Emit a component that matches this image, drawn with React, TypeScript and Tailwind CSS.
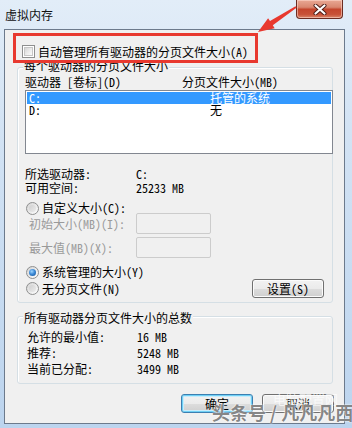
import React from "react";

function Checkbox() {
  return (
    <div className="flex h-[13px] w-[13px] shrink-0 items-center justify-center border border-[#8e8f8f] bg-white">
      <div className="h-[9px] w-[9px] border border-[#c6c6c6] bg-[linear-gradient(135deg,#d6d6d6_0%,#eeeeee_60%,#fafafa_100%)]" />
    </div>
  );
}

function Radio({ checked }: { checked?: boolean }) {
  return (
    <div className="flex h-[13px] w-[13px] shrink-0 items-center justify-center rounded-full border border-[#8e8f8f] bg-[linear-gradient(135deg,#d3d3d3_0%,#f2f2f2_70%,#ffffff_100%)]">
      {checked ? (
        <div className="h-[7px] w-[7px] rounded-full bg-[radial-gradient(circle_at_40%_35%,#9fd6ff_0%,#3d8ad6_45%,#0f4f95_100%)]" />
      ) : (
        <div className="h-[7px] w-[7px] rounded-full bg-[linear-gradient(135deg,#cfcfcf_0%,#ececec_100%)]" />
      )}
    </div>
  );
}

function Button({ label, focused }: { label: string; focused?: boolean }) {
  return (
    <div
      className={
        focused
          ? "flex h-[19px] w-[72px] items-center justify-center rounded-[3px] border border-[#3c7fb1] bg-[linear-gradient(180deg,#f2f2f2_0%,#ebebeb_50%,#dddddd_50%,#cfcfcf_100%)] shadow-[inset_0_0_0_1px_#6fd0f5,inset_0_0_0_2px_#c8ecfb]"
          : "flex h-[19px] w-[72px] items-center justify-center rounded-[3px] border border-[#707070] bg-[linear-gradient(180deg,#f2f2f2_0%,#ebebeb_50%,#dddddd_50%,#cfcfcf_100%)] shadow-[inset_0_0_0_1px_#fbfbfb]"
      }
    >
      <span className="leading-[12px]">{label}</span>
    </div>
  );
}

export default function App() {
  return (
    <div className="relative h-[428px] w-[352px] overflow-hidden bg-[linear-gradient(180deg,#e2edf8_0%,#d3e3f4_30%,#bcd4ee_100%)] font-['Noto_Sans_Mono_CJK_SC','Noto_Sans_CJK_SC',sans-serif] text-[12px] leading-[12px] text-black">
      {/* title bar */}
      <div className="flex h-[29px] items-start">
        <div className="pl-[5px] pt-[9px] font-['Noto_Sans_CJK_SC',sans-serif] text-[12px] leading-[12px] text-[#111]">
          虚拟内存
        </div>
        <div className="ml-auto mr-[9px] flex h-[19px] w-[47px] items-center justify-center rounded-b-[4px] border border-t-0 border-[#6b2c22] bg-[linear-gradient(180deg,#e9a894_0%,#d98770_40%,#c4462d_52%,#c85238_80%,#d9866a_100%)] shadow-[inset_0_0_0_1px_rgba(255,220,210,0.55)]">
          <svg width="14" height="11" viewBox="0 0 14 11">
            <path d="M2.5 1.5 L11.5 9.5 M11.5 1.5 L2.5 9.5" stroke="#4a1a14" strokeWidth="4" strokeLinecap="round" />
            <path d="M2.5 1.5 L11.5 9.5 M11.5 1.5 L2.5 9.5" stroke="#ffffff" strokeWidth="2.2" strokeLinecap="round" />
          </svg>
        </div>
      </div>

      {/* client area */}
      <div className="relative ml-[4px] mr-[7px] flex h-[395px] flex-col border border-[#6c7a8c] bg-[#f0f0f0] pl-[12px] pr-[11px]">
        {/* auto manage checkbox */}
        <div className="ml-[5px] mt-[15px] flex h-[13px] items-center">
          <Checkbox />
          <span className="ml-[3px]">自动管理所有驱动器的分页文件大小(A)</span>
        </div>

        {/* group 1 */}
        <div className="relative mt-[9px] flex h-[236px] flex-col rounded-[3px] border border-[#d5dfe5] shadow-[inset_1px_1px_0_#ffffff]">
          <span className="absolute left-[5px] top-[-8px] bg-[#f0f0f0] px-[1px]">每个驱动器的分页文件大小</span>
          <div className="mt-[8px] flex h-[12px]">
            <span className="ml-[7px] w-[157px]">驱动器 [卷标](D)</span>
            <span>分页文件大小(MB)</span>
          </div>
          <div className="ml-[7px] mr-[-1px] mt-[2px] flex h-[64px] flex-col border border-[#828790] bg-white p-[1px]">
            <div className="flex h-[12px] bg-[#3399ff] text-white">
              <span className="w-[183px] pl-[2px]">C:</span>
              <span>托管的系统</span>
            </div>
            <div className="flex h-[12px]">
              <span className="w-[183px] pl-[2px]">D:</span>
              <span>无</span>
            </div>
          </div>
          <div className="mt-[14px] flex h-[12px]">
            <span className="ml-[7px] w-[111px]">所选驱动器:</span>
            <span>C:</span>
          </div>
          <div className="mt-[2px] flex h-[12px]">
            <span className="ml-[7px] w-[111px]">可用空间:</span>
            <span>25233 MB</span>
          </div>
          <div className="ml-[8px] mt-[8px] flex h-[12px] items-center">
            <Radio />
            <span className="ml-[3px]">自定义大小(C):</span>
          </div>
          <div className="mt-[-1px] flex h-[21px] items-center">
            <span className="ml-[11px] w-[107px] text-[#9a9a9a]">初始大小(MB)(I):</span>
            <div className="h-[21px] w-[75px] rounded-[2px] border border-[#cccccc] bg-[#f0f0f0]" />
          </div>
          <div className="mt-[3px] flex h-[21px] items-center">
            <span className="ml-[11px] w-[107px] text-[#9a9a9a]">最大值(MB)(X):</span>
            <div className="h-[21px] w-[75px] rounded-[2px] border border-[#cccccc] bg-[#f0f0f0]" />
          </div>
          <div className="ml-[8px] mt-[8px] flex h-[12px] items-center">
            <Radio checked />
            <span className="ml-[3px]">系统管理的大小(Y)</span>
          </div>
          <div className="mt-[1px] flex h-[19px] items-center">
            <div className="ml-[8px] flex items-center">
              <Radio />
              <span className="ml-[3px]">无分页文件(N)</span>
            </div>
            <div className="ml-auto mr-[8px]">
              <Button label="设置(S)" />
            </div>
          </div>
        </div>

        {/* group 2 */}
        <div className="relative mt-[13px] flex h-[68px] flex-col rounded-[3px] border border-[#d5dfe5] shadow-[inset_1px_1px_0_#ffffff]">
          <span className="absolute left-[5px] top-[-5px] bg-[#f0f0f0] px-[1px]">所有驱动器分页文件大小的总数</span>
          <div className="mt-[14px] flex h-[12px]">
            <span className="ml-[9px] w-[110px]">允许的最小值:</span>
            <span>16 MB</span>
          </div>
          <div className="mt-[4px] flex h-[12px]">
            <span className="ml-[9px] w-[110px]">推荐:</span>
            <span>5248 MB</span>
          </div>
          <div className="mt-[4px] flex h-[12px]">
            <span className="ml-[9px] w-[110px]">当前已分配:</span>
            <span>3499 MB</span>
          </div>
        </div>

        {/* dialog buttons */}
        <div className="mr-[-1px] mt-[10px] flex justify-end gap-[9px]">
          <Button label="确定" focused />
          <Button label="取消" />
        </div>

        {/* red annotation box */}
        <div className="pointer-events-none absolute left-[8px] top-[3px] h-[30px] w-[245px] border-[3px] border-[#e8392f]" />
      </div>

      {/* red annotation arrow */}
      <svg className="pointer-events-none absolute left-0 top-0" width="352" height="428" viewBox="0 0 352 428">
        <polygon
          points="258,32 274.7,28.2 272.8,25.3 296.5,7.8 295.5,6.2 270,21.1 268.1,18.2"
          fill="#e8392f"
        />
      </svg>

      {/* watermarks */}
      <div className="pointer-events-none absolute left-[273px] top-[392px] font-['Noto_Sans_CJK_SC',sans-serif] text-[13px] leading-[13px] text-white/70">
        电脑配置网
      </div>
      <div className="pointer-events-none absolute left-[212px] top-[403px] whitespace-nowrap font-['Noto_Sans_CJK_SC',sans-serif] text-[18px] font-bold leading-[19px] text-[#5e5e5e]/75 [text-shadow:0_0_2px_#ffffff,0_0_1px_#ffffff]">
        头条号 / 凡凡凡西
      </div>
    </div>
  );
}
